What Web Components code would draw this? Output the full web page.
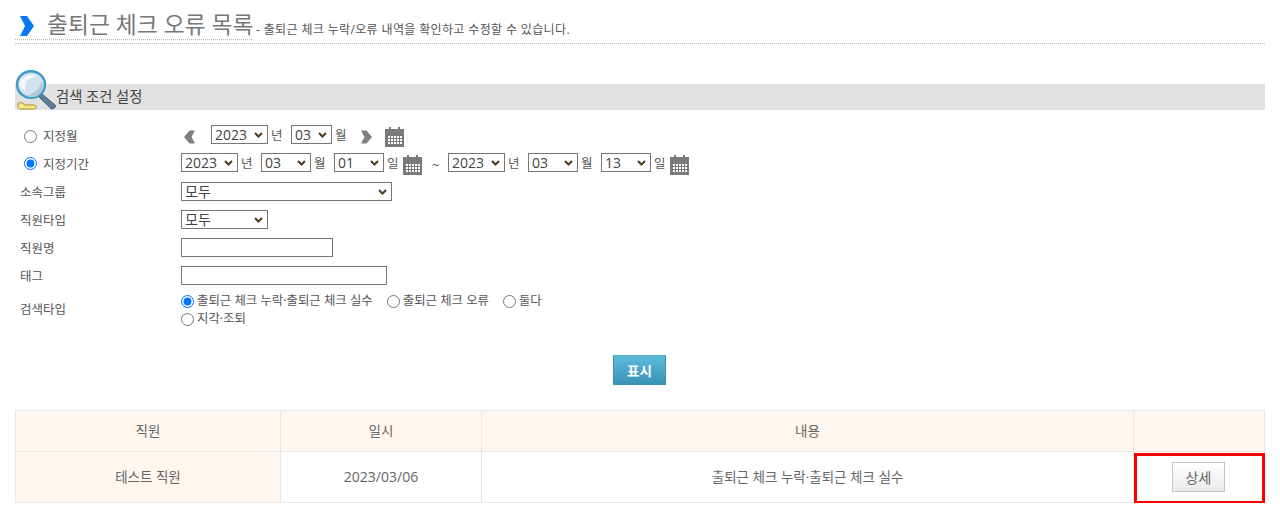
<!DOCTYPE html>
<html lang="ko">
<head>
<meta charset="utf-8">
<title>출퇴근 체크 오류 목록</title>
<style>
  body {
    margin: 0;
    background: #fff;
    color: #555;
    font-family: "Open Sans", "Noto Sans CJK KR", sans-serif;
    font-size: 12.5px;
  }
</style>
</head>
<body>
<x-page>
  <x-page-title heading="출퇴근 체크 오류 목록" note="- 출퇴근 체크 누락/오류 내역을 확인하고 수정할 수 있습니다."></x-page-title>
  <x-search-panel heading="검색 조건 설정">
    <x-form-row label="지정월" radio label-lift height="28">
      <x-arrow-icon dir="left" style="margin:2px 0 0 3px"></x-arrow-icon>
      <x-select options="2023" width="57" lift="3" style="margin-left:15px"></x-select><x-unit lift="3">년</x-unit>
      <x-select options="03" width="41" lift="3" style="margin-left:7px"></x-select><x-unit lift="3">월</x-unit>
      <x-arrow-icon dir="right" style="margin:2px 0 0 12px"></x-arrow-icon>
      <x-calendar-icon style="margin:2px 0 0 13px"></x-calendar-icon>
    </x-form-row>
    <x-form-row label="지정기간" radio checked height="27">
      <x-select options="2023" width="57" lift="2"></x-select><x-unit lift="3">년</x-unit>
      <x-select options="03" width="50" lift="2" style="margin-left:7px"></x-select><x-unit lift="3">월</x-unit>
      <x-select options="01" width="50" lift="2" style="margin-left:7px"></x-select><x-unit lift="3">일</x-unit>
      <x-calendar-icon style="margin:2px 0 0 3px"></x-calendar-icon>
      <span style="display:inline-block;width:8px;margin:3px 8px 0 10px">~</span>
      <x-select options="2023" width="57" lift="2"></x-select><x-unit lift="3">년</x-unit>
      <x-select options="03" width="50" lift="2" style="margin-left:7px"></x-select><x-unit lift="3">월</x-unit>
      <x-select options="13" width="50" lift="2" style="margin-left:7px"></x-select><x-unit lift="3">일</x-unit>
      <x-calendar-icon style="margin:2px 0 0 3px"></x-calendar-icon>
    </x-form-row>
    <x-form-row label="소속그룹" height="28"><x-select options="모두" width="211"></x-select></x-form-row>
    <x-form-row label="직원타입" height="28"><x-select options="모두" width="87"></x-select></x-form-row>
    <x-form-row label="직원명" height="28"><x-text-field width="152"></x-text-field></x-form-row>
    <x-form-row label="태그" height="28"><x-text-field width="206"></x-text-field></x-form-row>
    <x-form-row label="검색타입" label-lift height="40">
      <x-radio-group>
        <x-radio name="kind" checked>출퇴근 체크 누락·출퇴근 체크 실수</x-radio>
        <x-radio name="kind">출퇴근 체크 오류</x-radio>
        <x-radio name="kind">둘다</x-radio>
        <x-radio name="kind">지각·조퇴</x-radio>
      </x-radio-group>
    </x-form-row>
  </x-search-panel>
  <x-submit-bar label="표시"></x-submit-bar>
  <x-result-table>
    <x-cell head>직원</x-cell>
    <x-cell head>일시</x-cell>
    <x-cell head>내용</x-cell>
    <x-cell head></x-cell>
    <x-cell head>테스트 직원</x-cell>
    <x-cell style="font-size:14px">2023/03/06</x-cell>
    <x-cell>출퇴근 체크 누락·출퇴근 체크 실수</x-cell>
    <x-cell marked><x-detail-button>상세</x-detail-button></x-cell>
  </x-result-table>
</x-page>

<script>
/**
 * Outer page box, holds the left and right gutter.
 */
class XPage extends HTMLElement {
  constructor () {
    super()
    this.attachShadow({ mode: 'open' })
    this.shadowRoot.innerHTML = `
      <style>
        :host { display: block; padding: 0 15px; }
      </style>
      <slot></slot>
    `
  }
}

/**
 * Heading of the page with the blue chevron and the short note.
 */
class XPageTitle extends HTMLElement {
  constructor () {
    super()
    this.attachShadow({ mode: 'open' })
    this.shadowRoot.innerHTML = `
      <style>
        :host { display: flex; align-items: flex-end; height: 43px; border-bottom: 1px dotted #bbb; }
        .main { display: flex; align-items: center; height: 39px; padding-top: 6px; box-sizing: border-box; border-bottom: 1px dotted #bbb; width: 237px; flex: none; margin-bottom: 3px; white-space: nowrap; }
        svg { margin: 6px 13px 0 5px; flex: none; }
        h1 { margin: 0; font-size: 22.800px; font-weight: 400; color: #777; }
        p { margin: 0 0 5px 4px; font-size: 12px; letter-spacing: .36px; color: #555; white-space: nowrap; }
      </style>
      <div class="main">
        <svg width="14" height="20" viewBox="0 0 14 20"><path d="M0 0h7l7 10-7 10H0l5-10z" fill="#0a78f5"/></svg>
        <h1 id="heading"></h1>
      </div>
      <p id="note"></p>
    `
  }

  connectedCallback () {
    this.shadowRoot.querySelector('#heading').textContent = this.getAttribute('heading')
    this.shadowRoot.querySelector('#note').textContent = this.getAttribute('note')
  }
}

/**
 * Grey band with the magnifier and the form rows under it.
 */
class XSearchPanel extends HTMLElement {
  constructor () {
    super()
    this.attachShadow({ mode: 'open' })
    this.shadowRoot.innerHTML = `
      <style>
        :host { display: block; position: relative; margin-top: 40px; }
        .band { height: 26px; line-height: 26px; background: #e1e1e1; padding-left: 41px; font-size: 14.300px; color: #444; }
        svg { position: absolute; left: 0; top: -14px; }
        .rows { padding-top: 12px; }
      </style>
      <svg width="41" height="40" viewBox="0 0 41 40">
        <path d="M27 24l-3 3 12 11.500q2 1 3.500-.5t.5-3z" fill="#5b7f99" stroke="#3f5a70"/>
        <path d="M3 34q2-3 5-.5l2 1.500h9q2.500.5 2 2.500t-2.500 1.500H6q-4 0-3-5z" fill="#f8e77a" stroke="#a8923c"/>
        <ellipse cx="16" cy="14.500" rx="14" ry="13.300" fill="#d3e2ee" stroke="#3a9bc8" stroke-width="2.400"/>
        <path d="M5 15a11 10.500 0 0 1 17-8.500q-8 1-10.500 5t-1 9.500q-5.500-1.500-5.500-6z" fill="#f4f8fb"/>
        <path d="M10 25a11 10.500 0 0 0 16-14q-1 8-7 11.500t-9 2.500z" fill="#b4c8d8"/>
      </svg>
      <div class="band" id="heading"></div>
      <div class="rows"><slot></slot></div>
    `
  }

  connectedCallback () {
    this.shadowRoot.querySelector('#heading').textContent = this.getAttribute('heading')
  }
}

/**
 * One row of the search form: label column then the controls.
 */
class XFormRow extends HTMLElement {
  constructor () {
    super()
    this.attachShadow({ mode: 'open' })
    this.shadowRoot.innerHTML = `
      <style>
        :host { display: grid; grid-template-columns: 166px 1fr; align-items: center; }
        :host([label-lift]) .text { margin-bottom: 2px; }
        .label { display: flex; align-items: center; padding-left: 5px; color: #555; }
        .label.radio { padding-left: 9px; }
        input { margin: 0 6px 0 0; width: 13px; height: 13px; flex: none; }
        .controls { display: flex; align-items: center; white-space: nowrap; }
      </style>
      <div class="label" id="label"></div>
      <div class="controls"><slot></slot></div>
    `
  }

  connectedCallback () {
    this.style.height = this.getAttribute('height') + 'px'
    const label = this.shadowRoot.querySelector('#label')
    if (this.hasAttribute('radio')) {
      label.classList.add('radio')
      const radio = document.createElement('input')
      radio.type = 'radio'
      radio.name = 'period'
      radio.checked = this.hasAttribute('checked')
      label.append(radio)
    }
    const text = document.createElement('span')
    text.className = 'text'
    text.textContent = this.getAttribute('label')
    label.append(text)
  }
}

/**
 * Select with a drawn chevron, so the text stays centered in a 19px box.
 */
class XSelect extends HTMLElement {
  constructor () {
    super()
    this.attachShadow({ mode: 'open' })
    this.shadowRoot.innerHTML = `
      <style>
        :host { display: inline-flex; position: relative; }
        select {
          appearance: none; height: 19px; margin: 0; padding: 0 0 0 3px; box-sizing: border-box;
          border: 1px solid #767676; border-radius: 0; background: #fff; line-height: 17px;
          color: #444; font-family: "Open Sans", "Noto Sans CJK KR", sans-serif; font-size: 14px;
        }
        svg { position: absolute; right: 5px; top: 7px; pointer-events: none; }
      </style>
      <select></select>
      <svg width="9" height="6" viewBox="0 0 9 6"><path d="M1 1l3.500 3.500L8 1" fill="none" stroke="#4f3a20" stroke-width="2"/></svg>
    `
  }

  connectedCallback () {
    if (this.hasAttribute('lift')) this.style.marginBottom = this.getAttribute('lift') + 'px'
    const select = this.shadowRoot.querySelector('select')
    select.style.width = this.getAttribute('width') + 'px'
    const option = document.createElement('option')
    option.textContent = this.getAttribute('options')
    select.append(option)
  }
}

/**
 * Small text after a select, such as the year or month word.
 */
class XUnit extends HTMLElement {
  constructor () {
    super()
    this.attachShadow({ mode: 'open' })
    this.shadowRoot.innerHTML = `
      <style>
        :host { display: inline-block; margin-left: 3px; width: 13px; color: #555; }
      </style>
      <slot></slot>
    `
  }

  connectedCallback () {
    if (this.hasAttribute('lift')) this.style.marginBottom = this.getAttribute('lift') + 'px'
  }
}

/**
 * Plain text input.
 */
class XTextField extends HTMLElement {
  constructor () {
    super()
    this.attachShadow({ mode: 'open' })
    this.shadowRoot.innerHTML = `
      <style>
        :host { display: inline-flex; }
        input { height: 19px; margin: 0; padding: 0 2px; box-sizing: border-box; border: 1px solid #767676; }
      </style>
      <input type="text">
    `
  }

  connectedCallback () {
    this.shadowRoot.querySelector('input').style.width = this.getAttribute('width') + 'px'
  }
}

/**
 * Grey previous/next chevron.
 */
class XArrowIcon extends HTMLElement {
  constructor () {
    super()
    this.attachShadow({ mode: 'open' })
    this.shadowRoot.innerHTML = `
      <style>
        :host { display: inline-flex; }
      </style>
      <svg width="12" height="14" viewBox="0 0 12 14"><path id="shape" fill="#7f7f7f"/></svg>
    `
  }

  connectedCallback () {
    const right = this.getAttribute('dir') === 'right'
    this.shadowRoot.querySelector('#shape').setAttribute('d', right ? 'M1 .5h5.500L12 7l-5.500 6.500H1L4.500 7z' : 'M11 .5H5.500L0 7l5.500 6.500H11L7.500 7z')
  }
}

/**
 * Grey calendar with a white day grid.
 */
class XCalendarIcon extends HTMLElement {
  constructor () {
    super()
    this.attachShadow({ mode: 'open' })
    let dots = ''
    for (let y = 9; y < 18; y += 3) {
      for (let x = 3; x < 17; x += 3) {
        dots += `<rect x="${x}" y="${y}" width="2" height="2" fill="#fff"/>`
      }
    }
    this.shadowRoot.innerHTML = `
      <style>
        :host { display: inline-flex; }
      </style>
      <svg width="19" height="20" viewBox="0 0 19 20">
        <rect x="4" y="0" width="2" height="4" fill="#777"/>
        <rect x="13" y="0" width="2" height="4" fill="#777"/>
        <rect x="0" y="2" width="19" height="18" fill="#7a7a7a"/>
        ${dots}
      </svg>
    `
  }
}

/**
 * Wraps the search type radios over two lines.
 */
class XRadioGroup extends HTMLElement {
  constructor () {
    super()
    this.attachShadow({ mode: 'open' })
    this.shadowRoot.innerHTML = `
      <style>
        :host { display: flex; flex-wrap: wrap; width: 372px; column-gap: 14px; white-space: normal; }
      </style>
      <slot></slot>
    `
  }
}

/**
 * Radio with the label text right beside it.
 */
class XRadio extends HTMLElement {
  constructor () {
    super()
    this.attachShadow({ mode: 'open' })
    this.shadowRoot.innerHTML = `
      <style>
        :host { display: inline-flex; align-items: center; height: 18px; color: #555; font-size: 12.400px; white-space: nowrap; }
        input { margin: 2px 3px 0 0; width: 13px; height: 13px; flex: none; }
        span { margin-bottom: 1px; }
      </style>
      <input type="radio"><span><slot></slot></span>
    `
  }

  connectedCallback () {
    const radio = this.shadowRoot.querySelector('input')
    radio.name = this.getAttribute('name')
    radio.checked = this.hasAttribute('checked')
  }
}

/**
 * Centered teal submit button.
 */
class XSubmitBar extends HTMLElement {
  constructor () {
    super()
    this.attachShadow({ mode: 'open' })
    this.shadowRoot.innerHTML = `
      <style>
        :host { display: flex; justify-content: center; margin-top: 26px; padding-right: 1px; }
        button {
          width: 53px; height: 30px; margin: 0; padding: 0; cursor: pointer;
          border: 1px solid #3a94b4; border-top-color: #55b4d2; border-radius: 0;
          background: linear-gradient(#5cbad9, #3a93b6); color: #fff;
          font-family: "Noto Sans CJK KR", sans-serif; font-size: 13.500px; font-weight: 700;
        }
      </style>
      <button id="label"></button>
    `
  }

  connectedCallback () {
    this.shadowRoot.querySelector('#label').textContent = this.getAttribute('label')
  }
}

/**
 * Result list, four columns on a grid. The outer hairlines sit on the host,
 * each cell only draws its right and bottom line.
 */
class XResultTable extends HTMLElement {
  constructor () {
    super()
    this.attachShadow({ mode: 'open' })
    this.shadowRoot.innerHTML = `
      <style>
        :host {
          display: grid; margin-top: 25px;
          border-top: 1px solid #e8e8e8; border-left: 1px solid #e8e8e8;
          grid-template-columns: 265px 201px 652px 131px;
          grid-template-rows: 41px 51px;
        }
      </style>
      <slot></slot>
    `
  }
}

/**
 * One table cell.
 */
class XCell extends HTMLElement {
  constructor () {
    super()
    this.attachShadow({ mode: 'open' })
    this.shadowRoot.innerHTML = `
      <style>
        :host {
          display: flex; align-items: center; justify-content: center; position: relative;
          box-sizing: border-box; border-right: 1px solid #e8e8e8; border-bottom: 1px solid #e8e8e8;
          padding-bottom: 2px; font-size: 13.500px; color: #666;
        }
        :host([head]) { background: #fff6ef; }
        :host([marked]) { padding-bottom: 0; }
        :host([marked])::after {
          content: ""; position: absolute; left: 0; top: 1px; right: -1px; bottom: -2px;
          border: 3px solid #f00; pointer-events: none;
        }
      </style>
      <slot></slot>
    `
  }
}

/**
 * Light grey button of a result row.
 */
class XDetailButton extends HTMLElement {
  constructor () {
    super()
    this.attachShadow({ mode: 'open' })
    this.shadowRoot.innerHTML = `
      <style>
        :host { display: inline-flex; margin-right: 1px; }
        button {
          width: 53px; height: 30px; margin: 0; padding: 0;
          border: 1px solid #c4c4c4; border-radius: 0;
          background: linear-gradient(#fff, #ebebeb); color: #666;
          font-family: "Noto Sans CJK KR", sans-serif; font-size: 14px;
        }
      </style>
      <button><slot></slot></button>
    `
  }
}

customElements.define('x-page', XPage)
customElements.define('x-page-title', XPageTitle)
customElements.define('x-search-panel', XSearchPanel)
customElements.define('x-form-row', XFormRow)
customElements.define('x-select', XSelect)
customElements.define('x-unit', XUnit)
customElements.define('x-text-field', XTextField)
customElements.define('x-arrow-icon', XArrowIcon)
customElements.define('x-calendar-icon', XCalendarIcon)
customElements.define('x-radio-group', XRadioGroup)
customElements.define('x-radio', XRadio)
customElements.define('x-submit-bar', XSubmitBar)
customElements.define('x-result-table', XResultTable)
customElements.define('x-cell', XCell)
customElements.define('x-detail-button', XDetailButton)
</script>
</body>
</html>
